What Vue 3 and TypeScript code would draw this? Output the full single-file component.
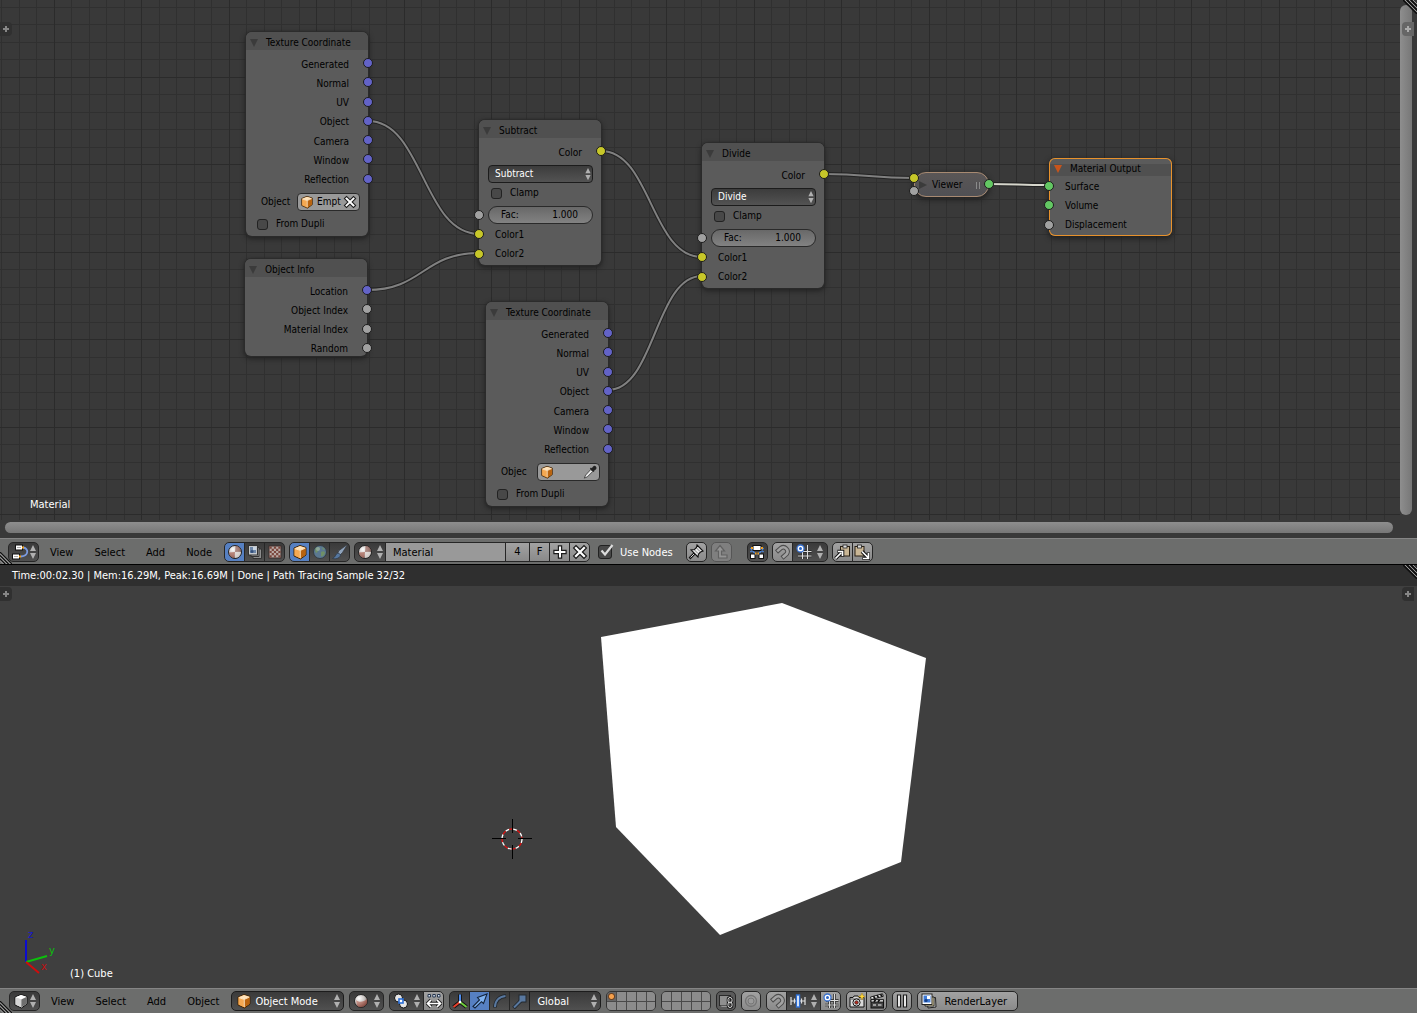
<script setup lang="ts">
import { reactive, ref } from 'vue'

type SocketColor = 'vector' | 'value' | 'color' | 'shader'

interface Socket {
  name: string
  type: SocketColor
}

interface EditorNode {
  id: string
  title: string
  x: number
  y: number
  active?: boolean
  outputs?: Socket[]
  inputs?: Socket[]
  blend?: string
  fac?: string
  clamp?: boolean
  picker?: { label: string; value: string }
  dupli?: boolean
}

const texOutputs: Socket[] = ['Generated', 'Normal', 'UV', 'Object', 'Camera', 'Window', 'Reflection'].map(
  (name) => ({ name, type: 'vector' }),
)
const mixInputs: Socket[] = [
  { name: 'Color1', type: 'color' },
  { name: 'Color2', type: 'color' },
]
const colorOutput: Socket[] = [{ name: 'Color', type: 'color' }]

const nodes = reactive<EditorNode[]>([
  {
    id: 'tex1', title: 'Texture Coordinate', x: 246, y: 32,
    outputs: texOutputs, picker: { label: 'Object', value: 'Empt' }, dupli: false,
  },
  {
    id: 'info', title: 'Object Info', x: 245, y: 259,
    outputs: [
      { name: 'Location', type: 'vector' },
      { name: 'Object Index', type: 'value' },
      { name: 'Material Index', type: 'value' },
      { name: 'Random', type: 'value' },
    ],
  },
  {
    id: 'subtract', title: 'Subtract', x: 479, y: 120,
    outputs: colorOutput, blend: 'Subtract', clamp: false, fac: '1.000', inputs: mixInputs,
  },
  {
    id: 'tex2', title: 'Texture Coordinate', x: 486, y: 302,
    outputs: texOutputs, picker: { label: 'Objec', value: '' }, dupli: false,
  },
  {
    id: 'divide', title: 'Divide', x: 702, y: 143,
    outputs: colorOutput, blend: 'Divide', clamp: false, fac: '1.000', inputs: mixInputs,
  },
  {
    id: 'output', title: 'Material Output', x: 1049, y: 158, active: true,
    inputs: [
      { name: 'Surface', type: 'shader' },
      { name: 'Volume', type: 'shader' },
      { name: 'Displacement', type: 'value' },
    ],
  },
])

const links: { d: string; lit?: boolean }[] = [
  { d: 'M368 121 C423 121 423 234 479 234' },
  { d: 'M367 290 C423 290 423 253 479 253' },
  { d: 'M601 151 C651 151 651 257 702 257' },
  { d: 'M608 390 C655 390 655 276 702 276' },
  { d: 'M824 174 C869 174 869 178 914 178' },
  { d: 'M988 184 C1018 184 1018 185 1049 185', lit: true },
]

const blendModes = ['Mix', 'Add', 'Subtract', 'Multiply', 'Divide']
const materialName = ref('Material')
const useNodes = ref(true)
const orientation = ref('Global')
const mode = ref('Object Mode')
const activeLayer = ref(0)
</script>

<template>
  <div class="screen">
    <svg class="defs" aria-hidden="true">
      <defs>
        <radialGradient id="g-ball" cx="0.35" cy="0.3" r="0.8">
          <stop offset="0" stop-color="#ffffff" />
          <stop offset="0.5" stop-color="#c9c4c2" />
          <stop offset="1" stop-color="#5b5452" />
        </radialGradient>
        <linearGradient id="g-red" x1="0" y1="0" x2="1" y2="1">
          <stop offset="0" stop-color="#d08b7c" />
          <stop offset="1" stop-color="#7c2a1e" />
        </linearGradient>
      </defs>
      <symbol id="i-arrows" viewBox="0 0 8 16">
        <path d="M4 1 L7 7 H1Z M4 15 L7 9 H1Z" fill="#b0b0b0" />
      </symbol>
      <symbol id="i-cube" viewBox="0 0 16 16">
        <path d="M8 1.5 L14 3.5 V11 L8.5 15 L2 12 V4Z" fill="#e58f2c" stroke="#3b2208" stroke-width="1" />
        <path d="M8 2 L13.5 3.8 L8.3 6.2 L2.5 4.3Z" fill="#ffe3bb" />
        <path d="M2.5 4.5 L8.2 6.4 V14.2 L2.5 11.6Z" fill="#f5a953" />
        <path d="M8.4 6.4 L13.5 4 V10.8 L8.4 14.3Z" fill="#b9630f" />
        <path d="M2.8 4.6 L8.3 6.4 L13.3 4.2 M8.3 6.4 V14" fill="none" stroke="#fff2dc" stroke-width="0.8" />
      </symbol>
      <symbol id="i-cube-grey" viewBox="0 0 16 16">
        <path d="M8 1.5 L14 3.5 V11 L8.5 15 L2 12 V4Z" fill="#ddd" stroke="#111" stroke-width="1" />
        <path d="M8 2 L13.5 3.8 L8.3 6.2 L2.5 4.3Z" fill="#fff" />
        <path d="M2.5 4.5 L8.2 6.4 V14.2 L2.5 11.6Z" fill="#d4d4d4" />
        <path d="M8.4 6.4 L13.5 4 V10.8 L8.4 14.3Z" fill="#6e6e6e" />
      </symbol>
      <symbol id="i-material" viewBox="0 0 16 16">
        <circle cx="8" cy="8" r="6.5" fill="url(#g-ball)" stroke="#222" />
        <path d="M8 8 L8.5 1.8 A6 6 0 0 1 14 7.4Z" fill="#8b5148" opacity="0.6" />
        <path d="M8 8 L2 8.6 A6 6 0 0 0 7.4 14Z" fill="#a4594a" opacity="0.65" />
        <path d="M8 8 L14 8 A6 6 0 0 1 8 14Z" fill="#e4dedb" opacity="0.8" />
      </symbol>
      <symbol id="i-shading" viewBox="0 0 16 16">
        <circle cx="8" cy="8" r="6.5" fill="url(#g-ball)" stroke="#222" />
        <path d="M3 7 C6 10 11 9 13.8 6 A6 6 0 0 1 4 12.4Z" fill="url(#g-red)" opacity="0.7" />
      </symbol>
      <symbol id="i-node" viewBox="0 0 18 16">
        <path d="M11 3.500 H12 C18 4 18 12 10 12.500" fill="none" stroke="#7b9be0" stroke-width="1.800" />
        <rect x="4.500" y="1" width="7" height="5" fill="#fff" stroke="#111" />
        <rect x="1.500" y="10" width="7" height="5" fill="#fff" stroke="#111" />
        <path d="M6 3.500 H10 M3 12.500 H7" stroke="#aaa" />
        <rect x="11" y="2.500" width="2" height="2" fill="#f5a21b" />
        <rect x="8" y="11.500" width="2" height="2" fill="#f5a21b" />
      </symbol>
      <symbol id="i-composite" viewBox="0 0 16 16">
        <path d="M6 5 H14.500 V14.500 H6Z" fill="#8d8d8d" stroke="#333" />
        <path d="M4 3.500 H12 V12.500 H4Z" fill="#a5a5a5" stroke="#333" />
        <rect x="1.500" y="1.500" width="9" height="9.500" fill="#c4c8cc" stroke="#333" />
        <rect x="3" y="3" width="6" height="6" fill="#6c86a8" />
        <path d="M6 3 H9 V6 H6Z" fill="#c8d4e2" /><circle cx="5" cy="7.500" r="1.500" fill="#34507c" />
      </symbol>
      <symbol id="i-texture" viewBox="0 0 16 16">
        <rect x="2" y="2" width="12" height="12" fill="#b8a9a4" stroke="#3a2d2a" />
        <path d="M2.500 2.500h2.200v2.200h-2.200zM6.900 2.500h2.200v2.200h-2.200zM11.300 2.500h2.200v2.200h-2.200zM4.700 4.700h2.200v2.200h-2.200zM9.100 4.700h2.200v2.200h-2.200zM2.500 6.900h2.200v2.200h-2.200zM6.900 6.900h2.200v2.200h-2.200zM11.300 6.900h2.200v2.200h-2.200zM4.700 9.100h2.200v2.200h-2.200zM9.100 9.100h2.200v2.200h-2.200zM2.500 11.300h2.200v2.200h-2.200zM6.900 11.300h2.200v2.200h-2.200zM11.300 11.300h2.200v2.200h-2.200z" fill="#7b463d" />
      </symbol>
      <symbol id="i-world" viewBox="0 0 16 16">
        <circle cx="8" cy="8" r="6.500" fill="#5b7891" stroke="#333c44" />
        <path d="M3 5 C5 2 8 3 8 5 C7 7 5 7 5 9 C4 9 3 8 3 5Z M9 8 C12 6 13 8 13 9 C12 12 10 13 9 12Z M10 3 L13 5 L11 6Z" fill="#6f9068" />
        <circle cx="6" cy="5" r="2" fill="#a9bccb" opacity="0.5" />
      </symbol>
      <symbol id="i-brush" viewBox="0 0 16 16">
        <path d="M15.500 0.500 L7 6.500 L5.500 9.500 L8 11 L10.500 8.500Z" fill="#8fa3bb" stroke="#33383e" stroke-width="0.7" />
        <path d="M6 9 C3.500 9.500 4 13 0.500 14.500 C5 15.500 8.500 13.500 8.500 10.500Z" fill="#56779f" stroke="#2b3644" stroke-width="0.7" />
      </symbol>
      <symbol id="i-x" viewBox="0 0 16 16">
        <path d="M4 4 L12 12 M12 4 L4 12" stroke="#1c1c1c" stroke-width="4.600" stroke-linecap="square" />
        <path d="M4 4 L12 12 M12 4 L4 12" stroke="#fff" stroke-width="2.200" stroke-linecap="square" />
      </symbol>
      <symbol id="i-plus" viewBox="0 0 16 16">
        <path d="M8 3.500 V12.500 M3.500 8 H12.500" stroke="#1c1c1c" stroke-width="4.400" stroke-linecap="square" />
        <path d="M8 3.500 V12.500 M3.500 8 H12.500" stroke="#fff" stroke-width="2" stroke-linecap="square" />
      </symbol>
      <symbol id="i-dropper" viewBox="0 0 16 16">
        <path d="M9 5 L3 11.500 L1.500 15 L5 13.500 L11 7.500Z" fill="#e8e8e8" stroke="#333" stroke-width="0.900" />
        <path d="M8.500 3.500 L12.500 7.500 M10 5 L12 2.500 C13.500 1 15.500 3 14 4.500 L12 6Z" fill="#222" stroke="#222" stroke-width="1.800" />
      </symbol>
      <symbol id="i-pin" viewBox="0 0 16 16">
        <path d="M6.500 9.500 L1.500 14.500" stroke="#111" stroke-width="2.500" />
        <path d="M9 1 L15 7 L12.500 8 L10.500 10 L10 13 L3 6 L6.500 5.500 L8.500 3.500Z" fill="#e9e9e9" stroke="#111" stroke-width="1.100" />
        <path d="M8.500 4 L12 7.500 M6.500 6 L10 9.500" stroke="#777" stroke-width="1" />
        <path d="M6 10 L2.500 13.500" stroke="#eee" stroke-width="0.900" />
      </symbol>
      <symbol id="i-parent" viewBox="0 0 16 16">
        <path d="M7 1.500 L11.500 7 H8.500 V11 H14 V14 H5.500 V7 H2.500Z" fill="#949494" stroke="#616161" stroke-width="1.200" />
      </symbol>
      <symbol id="i-backdrop" viewBox="0 0 16 16">
        <path d="M1.500 4 L7 11 M14.500 4 L9 11 M4 5 L1.500 8 M12 5 L14.500 8" stroke="#4d86d9" stroke-width="1.500" />
        <rect x="4" y="1.500" width="8" height="5" fill="#fff" stroke="#111" />
        <rect x="1.500" y="10" width="4.500" height="4.500" fill="#fff" stroke="#111" />
        <rect x="10" y="10" width="4.500" height="4.500" fill="#fff" stroke="#111" />
        <path d="M2 4 h2 M12 4 h2 M6 9.500 h1.500 M8.500 9.500 h1.500" stroke="#f0a020" stroke-width="1.800" />
      </symbol>
      <symbol id="i-magnet" viewBox="0 0 16 16">
        <path d="M2.500 8 L7 4 A4.200 4.200 0 0 1 12.800 9.800 L8 14" fill="none" stroke="#4c4c4c" stroke-width="4.600" />
        <path d="M3.200 7.400 L7 4 A4.200 4.200 0 0 1 12.800 9.800 L8.700 13.400" fill="none" stroke="#a2a2a2" stroke-width="2.600" />
      </symbol>
      <symbol id="i-grid" viewBox="0 0 16 16">
        <path d="M6.500 3 V15 M11.500 1 V15 M3 7.500 H15.500 M2 12 H15.500" stroke="#222" stroke-width="2.600" />
        <path d="M6.500 3 V15 M11.500 1 V15 M3 7.500 H15.500 M2 12 H15.500" stroke="#ddd" stroke-width="1.200" />
        <circle cx="4.500" cy="4.500" r="3.500" fill="#fff" stroke="#3a72cf" stroke-width="1.300" />
        <circle cx="4.500" cy="4.500" r="1.500" fill="#2b66c8" />
      </symbol>
      <symbol id="i-copy" viewBox="0 0 16 16">
        <rect x="6.500" y="2.500" width="9" height="9.500" fill="#c9b695" stroke="#2a2114" />
        <rect x="9" y="1" width="4" height="3" fill="#ddd" stroke="#222" stroke-width="0.800" />
        <path d="M1.500 14.500 L7 9 M3.500 7.500 H8.500 V12.500" fill="none" stroke="#111" stroke-width="3.600" />
        <path d="M1.500 14.500 L7 9 M4 7.500 H8.500 V12" fill="none" stroke="#fff" stroke-width="1.700" />
      </symbol>
      <symbol id="i-paste" viewBox="0 0 16 16">
        <rect x="1" y="2.500" width="9" height="9.500" fill="#c9b695" stroke="#2a2114" />
        <rect x="3.500" y="1" width="4" height="3" fill="#ddd" stroke="#222" stroke-width="0.800" />
        <path d="M8 7.500 L14 13.500 M14.500 8.500 V14.500 H8.500" fill="none" stroke="#111" stroke-width="3.600" />
        <path d="M8 7.500 L14 13.500 M14.500 9 V14.500 H9" fill="none" stroke="#fff" stroke-width="1.700" />
      </symbol>
      <symbol id="i-pivot" viewBox="0 0 16 16">
        <circle cx="5.500" cy="5" r="4" fill="#e6e6e6" stroke="#111" />
        <circle cx="10.500" cy="11" r="4" fill="#e6e6e6" stroke="#111" />
        <rect x="6" y="6" width="4" height="4" fill="#fff" stroke="#2b6fd8" stroke-width="1.600" />
      </symbol>
      <symbol id="i-centers" viewBox="0 0 16 16">
        <path d="M2 1.500h2.500v2.500h-2.500zM6.800 1.500h2.500v2.500h-2.500zM11.500 1.500h2.500v2.500h-2.500z" fill="#dce8fa" stroke="#27364d" stroke-width="1" />
        <path d="M2 10.500 H14 M5 7 L1.500 10.500 L5 14 M11 7 L14.500 10.500 L11 14" fill="none" stroke="#222" stroke-width="3.400" />
        <path d="M2 10.500 H14 M5 7 L1.500 10.500 L5 14 M11 7 L14.500 10.500 L11 14" fill="none" stroke="#fff" stroke-width="1.700" />
      </symbol>
      <symbol id="i-axes" viewBox="0 0 16 16">
        <path d="M8 9 V1.500 M8 9 L1.500 14 M8 9 L14.500 14" stroke="#111" stroke-width="3.800" />
        <path d="M8 9 V1.500" stroke="#4d8df0" stroke-width="2" />
        <path d="M8 9 L1.500 14" stroke="#e8402c" stroke-width="2" />
        <path d="M8 9 L14.500 14" stroke="#6fcf3c" stroke-width="2" />
        <circle cx="8" cy="9" r="1.300" fill="#fff" />
      </symbol>
      <symbol id="i-translate" viewBox="0 0 16 16">
        <path d="M1 13.500 L7.500 7 L5.500 4.500 L15 1 L11.500 10.500 L9.500 8.700 L3 15Z" fill="#7fb2f0" stroke="#14243b" stroke-width="1.100" />
      </symbol>
      <symbol id="i-rotate" viewBox="0 0 16 16">
        <path d="M3 14.500 C3 8 7 3.500 14 3" fill="none" stroke="#22282f" stroke-width="3.800" />
        <path d="M3 14 C3 8 7 3.500 13.500 3" fill="none" stroke="#59789f" stroke-width="2" />
      </symbol>
      <symbol id="i-scale" viewBox="0 0 16 16">
        <path d="M1.500 15 L9 7.500" stroke="#22282f" stroke-width="3.800" />
        <rect x="7" y="2" width="7" height="7" fill="#59789f" stroke="#22282f" />
        <path d="M2 14.500 L9 7.500" stroke="#59789f" stroke-width="2" />
      </symbol>
      <symbol id="i-lock" viewBox="0 0 16 16">
        <rect x="1.500" y="2.500" width="11" height="10" fill="#8f8f8f" stroke="#2a2a2a" />
        <path d="M2 12.500 H13 V3 L15 5 V14 H4Z" fill="#cfcfcf" opacity="0.500" />
        <rect x="10" y="4.500" width="4" height="5.500" rx="2" fill="none" stroke="#161616" stroke-width="2.600" />
        <rect x="10" y="9" width="4" height="5.500" rx="2" fill="none" stroke="#161616" stroke-width="2.600" />
        <rect x="10" y="4.500" width="4" height="5.500" rx="2" fill="none" stroke="#ddd" stroke-width="1" />
        <rect x="10" y="9" width="4" height="5.500" rx="2" fill="none" stroke="#ddd" stroke-width="1" />
      </symbol>
      <symbol id="i-prop" viewBox="0 0 16 16">
        <circle cx="8" cy="8" r="5.500" fill="none" stroke="#747474" stroke-width="1.300" />
        <circle cx="8" cy="8" r="3" fill="#9b9b9b" stroke="#777" stroke-width="1" />
      </symbol>
      <symbol id="i-increment" viewBox="0 0 16 16">
        <path d="M1 4 V12 M4.500 5.500 V10.500 M11.500 5.500 V10.500 M15 4 V12 M1 8 H15" stroke="#e0e0e0" stroke-width="1.200" />
        <rect x="6.500" y="2" width="3" height="12" fill="#fff" stroke="#2d6fd6" stroke-width="1.400" />
      </symbol>
      <symbol id="i-camera" viewBox="0 0 16 16">
        <path d="M1 4.500 H4 L5 3 H9 L10 4.500 H15 V14 H1Z" fill="#d9d9d9" stroke="#111" />
        <path d="M1.500 6 H14.500" stroke="#555" />
        <circle cx="7.500" cy="9.500" r="3.600" fill="#eee" stroke="#111" />
        <circle cx="7.500" cy="9.500" r="1.800" fill="#b42a1e" stroke="#222" stroke-width="0.700" />
        <path d="M13 0 L14 2.500 L16 3.500 L14 4.500 L13 7 L12 4.500 L9.500 3.500 L12 2.500Z" fill="#ffd83a" stroke="#a1780b" stroke-width="0.400" />
      </symbol>
      <symbol id="i-clapper" viewBox="0 0 16 16">
        <rect x="2" y="7" width="12.500" height="8" fill="#444" stroke="#111" />
        <path d="M1.500 4 L13.500 0.800 L14.300 3.300 L2.300 6.500Z M2 6.700 H14.500 V9 H2Z" fill="#eee" stroke="#111" stroke-width="0.900" />
        <path d="M4.500 3.200 L6 5.500 M8 2.300 L9.500 4.500 M11.500 1.300 L13 3.500 M5 9 L6.500 6.700 M9 9 L10.500 6.700" stroke="#111" stroke-width="1.600" />
        <path d="M4 12 H7 M9 12 H12.500" stroke="#bbb" stroke-width="1.400" />
      </symbol>
      <symbol id="i-pause" viewBox="0 0 16 16">
        <path d="M3.500 2 H6.500 V14 H3.500Z M9.500 2 H12.500 V14 H9.500Z" fill="#fff" stroke="#1c1c1c" stroke-width="1.200" />
      </symbol>
      <symbol id="i-layers" viewBox="0 0 16 16">
        <path d="M6 5.500 L14.500 4.500 L15 14 L7 15Z" fill="#c9c9c9" stroke="#222" />
        <path d="M4 4 H13 V13 H4Z" fill="#f2e4b0" stroke="#222" />
        <rect x="1" y="1" width="10" height="10.500" fill="#fff" stroke="#222" />
        <rect x="2.500" y="2.500" width="7" height="7" fill="#3f7ad6" />
        <path d="M6 3 H9 V6 H6Z" fill="#fff" /><circle cx="5" cy="7.500" r="1.600" fill="#153f86" />
      </symbol>
      <symbol id="i-check" viewBox="0 0 16 16">
        <path d="M3.500 6.500 L7 10.500 L14.500 1" fill="none" stroke="#dcdcdc" stroke-width="2.200" />
      </symbol>
      <symbol id="i-grip" viewBox="0 0 14 14">
        <path d="M0 0 L14 14 M4 0 L14 10 M8 0 L14 6" stroke="#0d0d0d" stroke-width="1.300" />
        <path d="M2 0 L14 12 M6 0 L14 8 M10 0 L14 4" stroke="#999" stroke-width="1" />
      </symbol>
      <symbol id="i-grip-left" viewBox="0 0 14 14">
        <path d="M0 0 L14 14 M0 4 L10 14 M0 8 L6 14" stroke="#0d0d0d" stroke-width="1.300" />
        <path d="M0 2 L12 14 M0 6 L8 14 M0 10 L4 14" stroke="#aaa" stroke-width="1" />
      </symbol>
      <symbol id="i-tab-plus" viewBox="0 0 12 14">
        <path d="M6 4 V10 M3 7 H9" stroke="currentColor" stroke-width="2" />
      </symbol>
    </svg>

    <main class="node-editor">
      <div class="canvas">
        <svg class="links" aria-hidden="true">
          <g v-for="(l, i) in links" :key="i" fill="none">
            <path :d="l.d" stroke="#222" stroke-width="4" />
            <path :d="l.d" :stroke="l.lit ? '#d6d6cc' : '#808080'" stroke-width="2" />
          </g>
        </svg>

        <section
          v-for="n in nodes"
          :key="n.id"
          class="node"
          :class="{ active: n.active }"
          :style="{ left: n.x + 'px', top: n.y + 'px' }"
        >
          <h2 class="node-title">
            <svg viewBox="0 0 8 8" class="tri"><path d="M0 0 H8 L4 8Z" /></svg>{{ n.title }}
          </h2>
          <ul v-if="n.outputs" class="sockets outputs" :class="'rows-' + n.outputs.length">
            <li v-for="s in n.outputs" :key="s.name">{{ s.name }}<i class="dot" :class="s.type"></i></li>
          </ul>
          <div v-if="n.picker" class="picker-row">
            <span class="picker-label">{{ n.picker.label }}</span>
            <span class="picker">
              <svg class="ic"><use href="#i-cube" /></svg>
              <input v-model="n.picker.value" type="text" :aria-label="n.title + ' object'" />
              <button type="button" :aria-label="n.picker.value ? 'Clear object' : 'Pick object'">
                <svg class="ic"><use :href="n.picker.value ? '#i-x' : '#i-dropper'" /></svg>
              </button>
            </span>
          </div>
          <label v-if="n.dupli !== undefined" class="check-row dupli">
            <input v-model="n.dupli" type="checkbox" class="tick" />From Dupli
          </label>
          <div v-if="n.blend" class="blend">
            <select v-model="n.blend" :aria-label="n.title + ' blend type'">
              <option v-for="b in blendModes" :key="b">{{ b }}</option>
            </select>
            <svg class="arrows"><use href="#i-arrows" /></svg>
          </div>
          <label v-if="n.clamp !== undefined" class="check-row">
            <input v-model="n.clamp" type="checkbox" class="tick" />Clamp
          </label>
          <label v-if="n.fac" class="fac">
            Fac:<input v-model="n.fac" type="text" /><i class="dot value"></i>
          </label>
          <ul v-if="n.inputs" class="sockets inputs" :class="'rows-' + n.inputs.length">
            <li v-for="s in n.inputs" :key="s.name">{{ s.name }}<i class="dot" :class="s.type"></i></li>
          </ul>
        </section>

        <section class="viewer">
          <svg viewBox="0 0 8 8" class="tri"><path d="M0 0 V8 L8 4Z" /></svg>
          <span>Viewer</span>
          <i class="grab"></i>
          <i class="dot color in-a"></i>
          <i class="dot value in-b"></i>
          <i class="dot shader out"></i>
        </section>

        <p class="overlay-name">Material</p>
      </div>
      <div class="vscroll"><div class="bar"></div></div>
      <div class="hscroll"><div class="bar"></div></div>
      <button type="button" class="tab left" aria-label="Open tool shelf"><svg><use href="#i-tab-plus" /></svg></button>
      <button type="button" class="tab right" aria-label="Open properties"><svg><use href="#i-tab-plus" /></svg></button>
      <svg class="grip"><use href="#i-grip" /></svg>
    </main>

    <header class="bar-row first">
      <svg class="grip-left"><use href="#i-grip-left" /></svg>
      <button type="button" class="btn dark editor" aria-label="Editor type">
        <svg class="ic wide"><use href="#i-node" /></svg><svg class="arrows"><use href="#i-arrows" /></svg>
      </button>
      <nav class="menus">
        <button v-for="m in ['View', 'Select', 'Add', 'Node']" :key="m" type="button">{{ m }}</button>
      </nav>
      <div class="group">
        <button type="button" class="btn dark on" aria-label="Material nodes"><svg class="ic"><use href="#i-material" /></svg></button>
        <button type="button" class="btn dark" aria-label="Compositing nodes"><svg class="ic"><use href="#i-composite" /></svg></button>
        <button type="button" class="btn dark" aria-label="Texture nodes"><svg class="ic"><use href="#i-texture" /></svg></button>
      </div>
      <div class="group">
        <button type="button" class="btn dark on" aria-label="Object shader"><svg class="ic"><use href="#i-cube" /></svg></button>
        <button type="button" class="btn dark" aria-label="World shader"><svg class="ic"><use href="#i-world" /></svg></button>
        <button type="button" class="btn dark" aria-label="Line style"><svg class="ic"><use href="#i-brush" /></svg></button>
      </div>
      <div class="group">
        <button type="button" class="btn dark pair browse" aria-label="Browse material">
          <svg class="ic"><use href="#i-material" /></svg><svg class="arrows"><use href="#i-arrows" /></svg>
        </button>
        <input v-model="materialName" type="text" class="name-field" aria-label="Material name" />
        <button type="button" class="btn light users">4</button>
        <button type="button" class="btn light">F</button>
        <button type="button" class="btn light" aria-label="New material"><svg class="ic"><use href="#i-plus" /></svg></button>
        <button type="button" class="btn light" aria-label="Unlink material"><svg class="ic"><use href="#i-x" /></svg></button>
      </div>
      <label class="use-nodes">
        <span class="tickbox">
          <input v-model="useNodes" type="checkbox" class="tick big" />
          <svg v-if="useNodes" class="check"><use href="#i-check" /></svg>
        </span>
        <span class="drop-text">Use Nodes</span>
      </label>
      <button type="button" class="btn light" aria-label="Pin"><svg class="ic"><use href="#i-pin" /></svg></button>
      <button type="button" class="btn faded" aria-label="Go to parent"><svg class="ic"><use href="#i-parent" /></svg></button>
      <button type="button" class="btn dark spaced" aria-label="Auto offset"><svg class="ic"><use href="#i-backdrop" /></svg></button>
      <div class="group">
        <button type="button" class="btn light" aria-label="Snap"><svg class="ic"><use href="#i-magnet" /></svg></button>
        <button type="button" class="btn dark pair" aria-label="Snap element">
          <svg class="ic"><use href="#i-grid" /></svg><svg class="arrows"><use href="#i-arrows" /></svg>
        </button>
      </div>
      <div class="group">
        <button type="button" class="btn light" aria-label="Copy nodes"><svg class="ic"><use href="#i-copy" /></svg></button>
        <button type="button" class="btn light" aria-label="Paste nodes"><svg class="ic"><use href="#i-paste" /></svg></button>
      </div>
    </header>

    <p class="status">
      Time:00:02.30 | Mem:16.29M, Peak:16.69M | Done | Path Tracing Sample 32/32
      <svg class="grip"><use href="#i-grip" /></svg>
    </p>

    <section class="view3d">
      <svg class="scene" aria-hidden="true">
        <path d="M601 51 L782 17 L926 72 L901 276 L720 349 L616 241Z" fill="#fff" />
        <g fill="none">
          <circle cx="512" cy="253" r="10" stroke="#fff" stroke-width="1.300" stroke-dasharray="4 4" />
          <circle cx="512" cy="253" r="10" stroke="#e01010" stroke-width="1.300" stroke-dasharray="4 4" stroke-dashoffset="4" />
          <path d="M492 252.500 H506 M518 252.500 H532 M512.500 233 V247 M512.500 259 V273" stroke="#000" />
        </g>
        <path d="M26 376 V354" stroke="#0c0cd0" stroke-width="2" />
        <path d="M26 376 L47 370" stroke="#0cc00c" stroke-width="2" />
        <path d="M26 376 L39 387" stroke="#d00c0c" stroke-width="2" />
        <text x="28" y="352" fill="#1414d0">z</text>
        <text x="49" y="368" fill="#0cc00c">y</text>
        <text x="41" y="384" fill="#c01010">x</text>
      </svg>
      <p class="object-name">(1) Cube</p>
      <button type="button" class="tab left" aria-label="Open tool shelf"><svg><use href="#i-tab-plus" /></svg></button>
      <button type="button" class="tab right" aria-label="Open properties"><svg><use href="#i-tab-plus" /></svg></button>
    </section>

    <footer class="bar-row second">
      <svg class="grip-left"><use href="#i-grip-left" /></svg>
      <button type="button" class="btn dark editor" aria-label="Editor type">
        <svg class="ic"><use href="#i-cube-grey" /></svg><svg class="arrows"><use href="#i-arrows" /></svg>
      </button>
      <nav class="menus">
        <button v-for="m in ['View', 'Select', 'Add', 'Object']" :key="m" type="button">{{ m }}</button>
      </nav>
      <div class="drop mode">
        <svg class="ic"><use href="#i-cube" /></svg>
        <select v-model="mode" aria-label="Mode"><option>Object Mode</option><option>Edit Mode</option></select>
        <svg class="arrows"><use href="#i-arrows" /></svg>
      </div>
      <button type="button" class="btn dark pair" aria-label="Viewport shading">
        <svg class="ic"><use href="#i-shading" /></svg><svg class="arrows"><use href="#i-arrows" /></svg>
      </button>
      <div class="group">
        <button type="button" class="btn dark pair" aria-label="Pivot point">
          <svg class="ic"><use href="#i-pivot" /></svg><svg class="arrows"><use href="#i-arrows" /></svg>
        </button>
        <button type="button" class="btn light" aria-label="Manipulate centers"><svg class="ic"><use href="#i-centers" /></svg></button>
      </div>
      <div class="group">
        <button type="button" class="btn dark" aria-label="Manipulator"><svg class="ic"><use href="#i-axes" /></svg></button>
        <button type="button" class="btn dark on" aria-label="Translate"><svg class="ic"><use href="#i-translate" /></svg></button>
        <button type="button" class="btn dark" aria-label="Rotate"><svg class="ic"><use href="#i-rotate" /></svg></button>
        <button type="button" class="btn dark" aria-label="Scale"><svg class="ic"><use href="#i-scale" /></svg></button>
        <div class="drop orient">
          <select v-model="orientation" aria-label="Orientation"><option>Global</option><option>Local</option></select>
          <svg class="arrows"><use href="#i-arrows" /></svg>
        </div>
      </div>
      <div v-for="g in 2" :key="g" class="layers">
        <button
          v-for="c in 10"
          :key="c"
          type="button"
          :class="{ used: g === 1 && c - 1 === activeLayer }"
          :aria-label="'Layer ' + ((g - 1) * 10 + c)"
          @click="activeLayer = (g - 1) * 10 + c - 1"
        ></button>
      </div>
      <button type="button" class="btn dim solo" aria-label="Lock to scene"><svg class="ic"><use href="#i-lock" /></svg></button>
      <button type="button" class="btn light solo" aria-label="Proportional editing"><svg class="ic"><use href="#i-prop" /></svg></button>
      <div class="group">
        <button type="button" class="btn light" aria-label="Snap"><svg class="ic"><use href="#i-magnet" /></svg></button>
        <button type="button" class="btn dark pair" aria-label="Snap element">
          <svg class="ic"><use href="#i-increment" /></svg><svg class="arrows"><use href="#i-arrows" /></svg>
        </button>
        <button type="button" class="btn light" aria-label="Absolute grid snap"><svg class="ic"><use href="#i-grid" /></svg></button>
      </div>
      <div class="group">
        <button type="button" class="btn light" aria-label="Render image"><svg class="ic"><use href="#i-camera" /></svg></button>
        <button type="button" class="btn light" aria-label="Render animation"><svg class="ic"><use href="#i-clapper" /></svg></button>
      </div>
      <button type="button" class="btn light solo" aria-label="Pause render"><svg class="ic"><use href="#i-pause" /></svg></button>
      <button type="button" class="btn light layer-name"><svg class="ic"><use href="#i-layers" /></svg><span class="drop-text">RenderLayer</span></button>
    </footer>
  </div>
</template>

<style>
body {
  background: #3f3f3f;
}
</style>

<style scoped>
* {
  box-sizing: border-box;
}
.screen {
  display: flex;
  flex-direction: column;
  min-height: 100vh;
  overflow: hidden;
  background: #3f3f3f;
  color: #000;
  font: 11px/16px "DejaVu Sans Condensed", "DejaVu Sans", sans-serif;
}
button,
input,
select {
  margin: 0;
  padding: 0;
  border: 0;
  background: none;
  color: inherit;
  font: inherit;
}
p,
h2,
ul {
  margin: 0;
  padding: 0;
}
.defs {
  position: absolute;
  width: 0;
  height: 0;
}
.ic {
  flex: none;
  width: 16px;
  height: 16px;
}
.ic.wide {
  width: 18px;
}
.arrows {
  flex: none;
  width: 8px;
  height: 16px;
}

/* node editor */
.node-editor {
  position: relative;
  flex: 1 0 538px;
  display: grid;
  grid-template: 1fr 18px / 1fr 17px;
  background: #393939;
}
.canvas {
  position: relative;
  overflow: hidden;
  background-image:
    linear-gradient(90deg, transparent 54px, #2b2b2b 54px 55px, transparent 55px 141px, #2b2b2b 141px 142px, transparent 142px),
    linear-gradient(transparent 77px, #2b2b2b 77px 78px, transparent 78px 164px, #2b2b2b 164px 165px, transparent 165px),
    linear-gradient(90deg, transparent 1px, #303030 1px 2px, transparent 2px 19px, #303030 19px 20px, transparent 20px),
    linear-gradient(transparent 7px, #303030 7px 8px, transparent 8px 24px, #303030 24px 25px, transparent 25px);
  background-size: 175px 100%, 100% 175px, 35px 100%, 100% 35px;
}
.links {
  position: absolute;
  inset: 0;
  width: 100%;
  height: 100%;
}
.vscroll {
  padding: 5px 5px 5px 0;
}
.hscroll {
  grid-column: 1 / 3;
  padding: 2px 24px 5px 5px;
}
.vscroll .bar,
.hscroll .bar {
  height: 100%;
  border-radius: 6px;
  background: linear-gradient(#8e8e8e, #777);
}
.vscroll .bar {
  background: linear-gradient(90deg, #8e8e8e, #777);
}
.tab {
  position: absolute;
  width: 12px;
  height: 14px;
  background: #303030;
  color: #868686;
}
.tab svg {
  display: block;
  width: 12px;
  height: 14px;
}
.tab.left {
  left: 0;
  border-radius: 0 4px 4px 0;
}
.tab.right {
  right: 3px;
  border-radius: 4px 0 0 4px;
}
.node-editor .tab {
  top: 22px;
}
.node-editor .tab.right {
  background: #666;
  color: #aaa;
}
.view3d .tab {
  top: 1px;
}
.grip {
  position: absolute;
  top: 0;
  right: 0;
  width: 14px;
  height: 14px;
}
.overlay-name {
  position: absolute;
  left: 30px;
  bottom: 7px;
  color: #fff;
}

.node {
  position: absolute;
  width: 122px;
  padding-bottom: 2px;
  border-radius: 6px;
  background: #5b5b5b;
  box-shadow: 0 0 1px 1px #2c2c2c, 0 2px 5px 1px #222;
  font-size: 10px;
}
.node.active {
  width: 123px;
  box-shadow: inset 0 0 0 1px #e8922c, 0 2px 5px 1px #222;
}
.node-title {
  display: flex;
  align-items: center;
  gap: 8px;
  height: 18px;
  padding: 4px 0 0 4px;
  border-radius: 6px 6px 0 0;
  background: #505050;
  font-size: 10px;
  font-weight: normal;
}
.active .node-title {
  margin: 0 1px;
  background: linear-gradient(transparent 6px, #505050 6px);
}
.tri {
  width: 8px;
  height: 8px;
  fill: #3b3b3b;
}
.active .tri {
  fill: #c7541b;
}
.sockets {
  display: grid;
  grid-auto-rows: 1fr;
  list-style: none;
}
.outputs {
  margin-top: 3px;
  text-align: right;
}
.rows-1 {
  height: 19px;
}
.rows-2 {
  height: 39px;
}
.rows-3 {
  height: 58px;
}
.rows-4 {
  height: 77px;
}
.rows-7 {
  height: 135px;
}
.sockets li {
  position: relative;
  display: flex;
  align-items: center;
  height: 19px;
  padding: 2px 19px 0 16px;
}
.outputs li {
  justify-content: flex-end;
  padding-top: 4px;
}
.outputs.rows-4 {
  margin-bottom: -3px;
}
.dot {
  position: absolute;
  top: 5px;
  left: -5px;
  width: 10px;
  height: 10px;
  border: 1px solid #1c1c1c;
  border-radius: 50%;
}
.outputs .dot {
  right: -5px;
  left: auto;
}
.dot.vector {
  background: #6363c7;
}
.dot.value {
  background: #a1a1a1;
}
.dot.color {
  background: #c7c729;
}
.dot.shader {
  background: #63c763;
}
.picker-row {
  display: flex;
  justify-content: space-between;
  align-items: center;
  height: 18px;
  margin: 5px 8px 0 15px;
}
.picker {
  display: flex;
  align-items: center;
  width: 63px;
  height: 18px;
  padding: 0 2px;
  border: 1px solid #2a2a2a;
  border-radius: 4px;
  background: #999;
}
.picker .ic {
  display: block;
  width: 14px;
  height: 14px;
}
.picker input {
  flex: 1;
  min-width: 0;
  padding-left: 3px;
}
.check-row {
  display: flex;
  align-items: center;
  gap: 8px;
  height: 20px;
  padding-left: 12px;
}
.dupli {
  margin-top: 3px;
  padding-left: 11px;
}
.tick {
  width: 11px;
  height: 11px;
  border: 1px solid #222;
  border-radius: 3px;
  background: #484848;
  appearance: none;
}
.blend {
  position: relative;
  height: 18px;
  margin: 5px 8px 0 9px;
}
.blend select {
  width: 100%;
  height: 18px;
  padding-left: 6px;
  border: 1px solid #1c1c1c;
  border-radius: 4px;
  background: linear-gradient(#3c3c3c, #535353);
  color: #fff;
  appearance: none;
}
.blend .arrows {
  position: absolute;
  top: 2px;
  right: 1px;
  height: 14px;
}
.fac {
  position: relative;
  display: flex;
  align-items: center;
  height: 18px;
  margin: 3px 8px 0 9px;
  padding: 0 14px 0 12px;
  border: 1px solid #2a2a2a;
  border-radius: 9px;
  background: linear-gradient(#686868, #828282);
}
.fac input {
  flex: 1;
  min-width: 0;
  text-align: right;
}
.fac .dot {
  top: 3px;
  left: -15px;
}
.viewer {
  position: absolute;
  top: 172px;
  left: 914px;
  display: flex;
  align-items: center;
  width: 75px;
  height: 25px;
  padding: 1px 8px 0 4px;
  border: 1px solid #a88a72;
  border-radius: 12px;
  background: linear-gradient(#5a5656, #505054);
  box-shadow: 0 2px 5px 1px #222;
  font-size: 10px;
}
.viewer span {
  flex: 1;
  padding-left: 5px;
}
.grab {
  width: 4px;
  height: 7px;
  border: 1px solid #8a8a8a;
  border-width: 0 1px;
}
.viewer .in-a {
  top: 0;
  left: -6px;
}
.viewer .in-b {
  top: 13px;
  left: -6px;
}
.viewer .out {
  top: 6px;
  right: -6px;
  left: auto;
}

/* header bars */
.bar-row {
  position: relative;
  display: flex;
  flex-wrap: wrap;
  align-items: flex-start;
  gap: 0 4px;
  min-height: 25px;
  border-top: 1px solid #858585;
  background: #6c6d6c;
}
.first {
  padding: 3px 8px 2px;
  border-bottom: 1px solid #000;
}
.second {
  column-gap: 5px;
  padding: 2px 9px;
}
.grip-left {
  position: absolute;
  bottom: 0;
  left: 0;
  width: 12px;
  height: 12px;
}
.btn {
  display: flex;
  align-items: center;
  justify-content: center;
  width: 21px;
  height: 20px;
  border: 1px solid #262626;
  border-radius: 5px;
}
.dark {
  background: linear-gradient(#3a3a3a, #505050);
}
.dark.on {
  background: #5680c2;
}
.light {
  background: linear-gradient(#a2a2a2, #8a8a8a);
}
.faded {
  border-color: #565656;
  background: #7f7f7f;
}
.dim {
  background: #5a5a5a;
}
.solo {
  width: 20px;
}
.editor {
  width: 31px;
}
.pair {
  width: 36px;
  gap: 4px;
}
.second .pair {
  width: 35px;
}
.first .browse {
  width: 32px;
  gap: 3px;
}
.menus {
  display: flex;
  gap: 21px;
  height: 20px;
  margin: 0 8px 0 7px;
}
.second .menus {
  margin: 0 7px 0 6px;
}
.menus button,
.drop-text {
  padding-top: 2px;
}
.group {
  display: flex;
}
.group > * {
  margin-right: -1px;
  border-radius: 0;
}
.group > :first-child {
  border-radius: 5px 0 0 5px;
}
.group > :last-child {
  margin-right: 0;
  border-radius: 0 5px 5px 0;
}
.name-field {
  width: 121px;
  height: 20px;
  padding: 1px 0 0 7px;
  border: 1px solid #262626;
  background: #999;
}
.users {
  width: 25px;
}
.use-nodes {
  display: flex;
  align-items: center;
  gap: 8px;
  height: 20px;
  margin: 0 9px 0 4px;
  color: #fff;
}
.tickbox {
  position: relative;
  height: 14px;
}
.tick.big {
  display: block;
  width: 14px;
  height: 14px;
}
.check {
  position: absolute;
  top: -1px;
  left: 0;
  width: 16px;
  height: 16px;
}
.spaced {
  margin-left: 11px;
}
.drop {
  display: flex;
  align-items: center;
  height: 20px;
  padding: 0 2px 0 4px;
  border: 1px solid #1c1c1c;
  border-radius: 5px;
  background: linear-gradient(#3a3a3a, #505050);
  color: #fff;
}
.drop select {
  flex: 1;
  min-width: 0;
  padding: 1px 0 0 3px;
  appearance: none;
}
.mode {
  width: 113px;
}
.orient {
  width: 72px;
}
.layers {
  display: grid;
  grid-template-columns: repeat(5, 1fr);
  width: 50px;
  height: 20px;
  overflow: hidden;
  gap: 1px;
  border: 1px solid #333;
  border-radius: 5px;
  background: #4a4a4a;
}
.layers button {
  background: #8c8c8c;
}
.layers .used {
  background: radial-gradient(circle, #f5a04c 2px, #6b4020 3px, #666 4px);
}
.layer-name {
  justify-content: flex-start;
  gap: 7px;
  width: 101px;
  padding-left: 3px;
}

/* 3D view */
.status {
  position: relative;
  height: 21px;
  padding: 3px 12px 2px;
  background: #2f2f2f;
  color: #fff;
}
.view3d {
  position: relative;
  flex: 1 0 402px;
  background: #3f3f3f;
}
.scene {
  display: block;
  width: 100%;
  height: 402px;
}
.object-name {
  position: absolute;
  bottom: 6px;
  left: 70px;
  color: #fff;
}
</style>
